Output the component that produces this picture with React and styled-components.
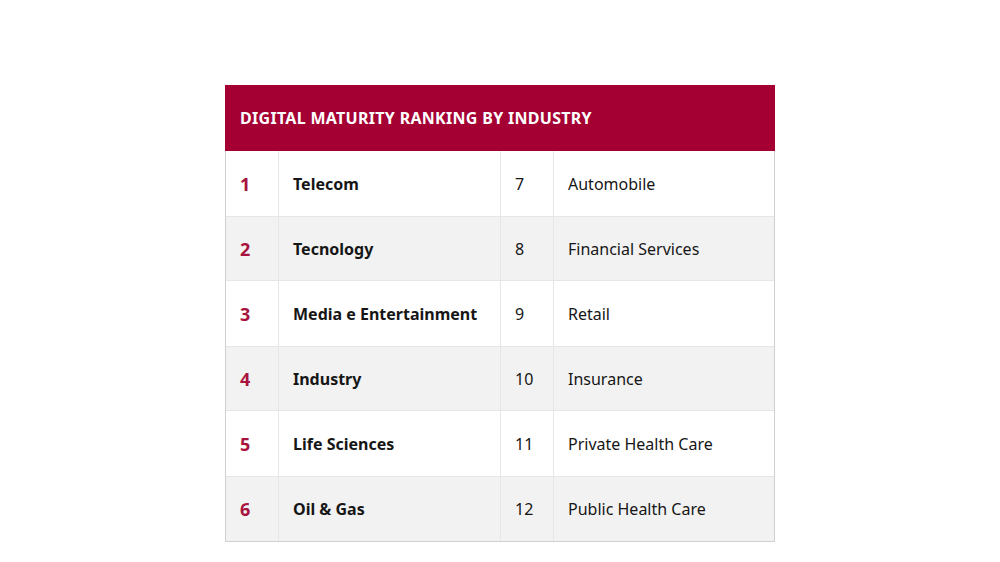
import styled, { createGlobalStyle } from 'styled-components'

const GlobalStyle = createGlobalStyle`
  body {
    margin: 0;
    background: #ffffff;
    font-family: 'Noto Sans', 'Open Sans', sans-serif;
  }
`

const left = [
  'Telecom',
  'Tecnology',
  'Media e Entertainment',
  'Industry',
  'Life Sciences',
  'Oil & Gas',
]

const right = [
  'Automobile',
  'Financial Services',
  'Retail',
  'Insurance',
  'Private Health Care',
  'Public Health Care',
]

const App = () => {
  return (
    <Page>
      <GlobalStyle />
      <Table>
        <Header>DIGITAL MATURITY RANKING BY INDUSTRY</Header>
        {left.map((name, i) => (
          <Row key={name} $shaded={i % 2 === 1}>
            <Cell $accent>{i + 1}</Cell>
            <Cell $bold>{name}</Cell>
            <Cell>{i + 7}</Cell>
            <Cell $last>{right[i]}</Cell>
          </Row>
        ))}
      </Table>
    </Page>
  )
}

export default App

const Page = styled.main`
  display: flex;
  justify-content: center;
  padding-top: 85px;
  height: 562px;
  box-sizing: border-box;
`

const Table = styled.div`
  width: 550px;
  align-self: flex-start;
  border: 1px solid #cfcfcf;
  border-top: none;
  box-sizing: border-box;
`

const Header = styled.div`
  height: 66px;
  margin: 0 -1px;
  padding: 0 15px;
  display: flex;
  align-items: center;
  background: #a50034;
  color: #ffffff;
  font-size: 16px;
  font-weight: 700;
  letter-spacing: 0.3px;
`

const Row = styled.div`
  display: grid;
  grid-template-columns: 53px 222px 53px 1fr;
  height: 65px;
  background: ${(p) => (p.$shaded ? '#f2f2f2' : '#ffffff')};
  border-top: ${(p) => (p.$shaded ? '1px solid #e6e6e6' : 'none')};
  border-bottom: ${(p) => (p.$shaded ? '1px solid #e6e6e6' : 'none')};
  box-sizing: border-box;

  &:last-child {
    border-bottom: none;
  }
`

const Cell = styled.div`
  display: flex;
  align-items: center;
  padding-left: 14px;
  border-right: ${(p) => (p.$last ? 'none' : '1px solid #e6e6e6')};
  font-size: ${(p) => (p.$accent ? '18px' : '16px')};
  font-weight: ${(p) => (p.$bold || p.$accent ? 700 : 400)};
  color: ${(p) => (p.$accent ? '#a8123e' : '#161616')};
`
